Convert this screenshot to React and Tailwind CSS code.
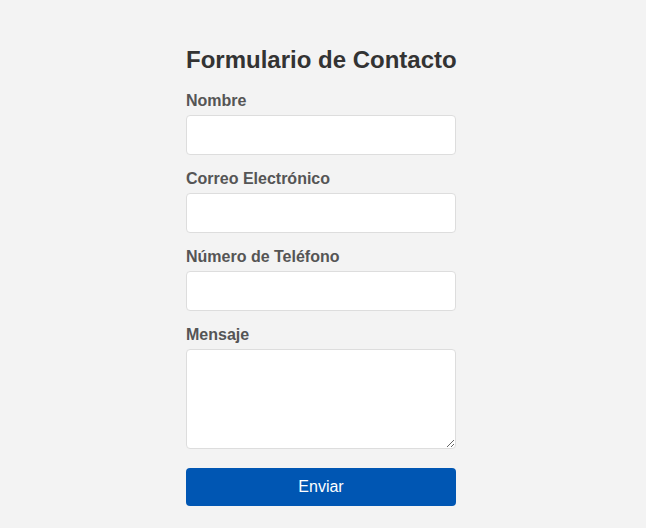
export default function App() {
  const font = { fontFamily: '"Liberation Sans", Arial, sans-serif' };
  return (
    <div className="min-h-[528px] w-full bg-[#f3f3f3] flex justify-center pr-[4px] pt-[46px]" style={font}>
      <form className="w-[270px] flex flex-col" onSubmit={(e) => e.preventDefault()}>
        <h2 className="text-[24px] leading-[27px] font-bold text-[#333] mb-[19px] whitespace-nowrap">Formulario de Contacto</h2>
        <label className="block text-[16px] leading-[18px] font-bold text-[#555] mb-[5px]">Nombre</label>
        <input type="text" className="block w-full h-[40px] bg-white border border-[#ddd] rounded-[4px] mb-[15px] outline-none" />
        <label className="block text-[16px] leading-[18px] font-bold text-[#555] mb-[5px]">Correo Electrónico</label>
        <input type="email" className="block w-full h-[40px] bg-white border border-[#ddd] rounded-[4px] mb-[15px] outline-none" />
        <label className="block text-[16px] leading-[18px] font-bold text-[#555] mb-[5px]">Número de Teléfono</label>
        <input type="tel" className="block w-full h-[40px] bg-white border border-[#ddd] rounded-[4px] mb-[15px] outline-none" />
        <label className="block text-[16px] leading-[18px] font-bold text-[#555] mb-[5px]">Mensaje</label>
        <textarea className="block w-full h-[100px] bg-white border border-[#ddd] rounded-[4px] mb-[19px] outline-none resize" />
        <button type="submit" className="w-full h-[38px] bg-[#0056b3] text-white text-[16px] rounded-[4px]">Enviar</button>
      </form>
    </div>
  );
}
